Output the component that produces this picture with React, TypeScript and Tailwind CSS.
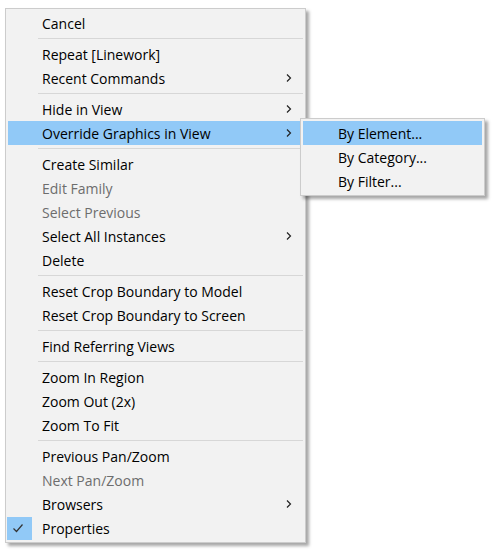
import React from 'react';

type Entry =
  | { kind: 'sep' }
  | { kind: 'item'; label: string; disabled?: boolean; sub?: boolean; active?: boolean; checked?: boolean };

const entries: Entry[] = [
  { kind: 'item', label: 'Cancel' },
  { kind: 'sep' },
  { kind: 'item', label: 'Repeat [Linework]' },
  { kind: 'item', label: 'Recent Commands', sub: true },
  { kind: 'sep' },
  { kind: 'item', label: 'Hide in View', sub: true },
  { kind: 'item', label: 'Override Graphics in View', sub: true, active: true },
  { kind: 'sep' },
  { kind: 'item', label: 'Create Similar' },
  { kind: 'item', label: 'Edit Family', disabled: true },
  { kind: 'item', label: 'Select Previous', disabled: true },
  { kind: 'item', label: 'Select All Instances', sub: true },
  { kind: 'item', label: 'Delete' },
  { kind: 'sep' },
  { kind: 'item', label: 'Reset Crop Boundary to Model' },
  { kind: 'item', label: 'Reset Crop Boundary to Screen' },
  { kind: 'sep' },
  { kind: 'item', label: 'Find Referring Views' },
  { kind: 'sep' },
  { kind: 'item', label: 'Zoom In Region' },
  { kind: 'item', label: 'Zoom Out (2x)' },
  { kind: 'item', label: 'Zoom To Fit' },
  { kind: 'sep' },
  { kind: 'item', label: 'Previous Pan/Zoom' },
  { kind: 'item', label: 'Next Pan/Zoom', disabled: true },
  { kind: 'item', label: 'Browsers', sub: true },
  { kind: 'item', label: 'Properties', checked: true },
];

const overrideItems = ['By Element...', 'By Category...', 'By Filter...'];

const Chevron = () => (
  <svg width="6" height="10" viewBox="0 0 6 10" className="shrink-0">
    <path d="M1 1.5 L4.5 5 L1 8.5" fill="none" stroke="#222" strokeWidth="1.2" />
  </svg>
);

const Check = () => (
  <svg width="12" height="10" viewBox="0 0 12 10">
    <path d="M1.5 5.5 L4.5 8.5 L10.5 1.5" fill="none" stroke="#333" strokeWidth="1.2" />
  </svg>
);

const Separator = () => (
  <div className="h-[7px] flex items-center pl-[30px]">
    <div className="h-px flex-1 bg-[#d7d7d7]" />
  </div>
);

const SubMenu = () => (
  <div className="absolute left-[292px] top-[-3px] w-[185px] border border-[#cccccc] bg-[#f2f2f2] p-[2px] shadow-[3px_3px_3px_rgba(0,0,0,0.35)]">
    {overrideItems.map((label, i) => (
      <div
        key={label}
        className={`h-6 flex items-center pl-[35px] pt-px ${i === 0 ? 'bg-[#91c9f7]' : ''}`}
      >
        {label}
      </div>
    ))}
  </div>
);

export default function App() {
  return (
    <div
      className="w-[496px] h-[553px] bg-white pt-2 pl-[5px] text-[14px] text-black leading-none"
      style={{ fontFamily: '"Segoe UI", "Open Sans", sans-serif' }}
    >
      <div className="relative w-[301px] border border-[#cccccc] bg-[#f2f2f2] p-[2px] shadow-[3px_3px_3px_rgba(0,0,0,0.35)]">
        {entries.map((e, i) => {
          if (e.kind === 'sep') return <Separator key={i} />;
          return (
            <div
              key={i}
              className={`relative h-6 flex items-center pr-[11px] ${e.active ? 'bg-[#91c9f7]' : ''} ${
                e.disabled ? 'text-[#6d6d6d]' : ''
              }`}
            >
              <div className="w-[34px] h-6 flex items-center shrink-0">
                {e.checked && (
                  <div className="-ml-px w-[25px] h-[23px] bg-[#91c9f7] flex items-center justify-center pr-[4px]">
                    <Check />
                  </div>
                )}
              </div>
              <span className="flex-1 pt-px">{e.label}</span>
              {e.sub && <Chevron />}
              {e.active && <SubMenu />}
            </div>
          );
        })}
      </div>
    </div>
  );
}
